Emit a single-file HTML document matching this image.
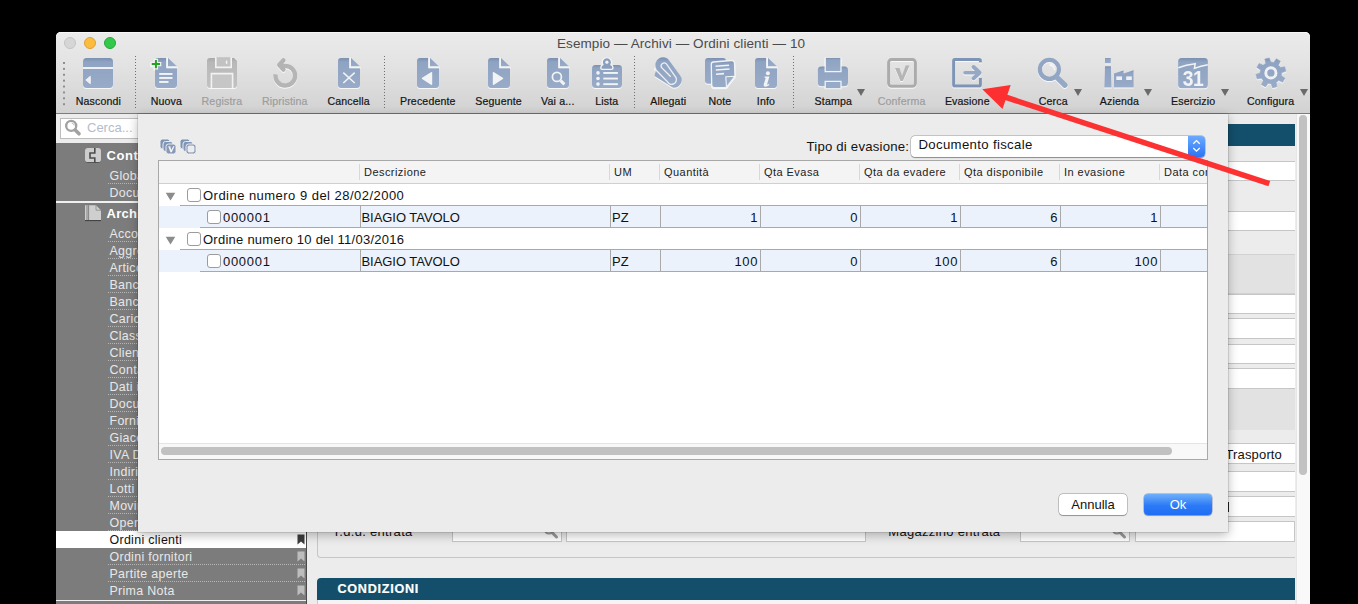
<!DOCTYPE html>
<html><head><meta charset="utf-8">
<style>
*{box-sizing:border-box;margin:0;padding:0}
html,body{width:1358px;height:604px;overflow:hidden;background:#000;font-family:"Liberation Sans",sans-serif}
div,span{position:absolute}
.t{white-space:nowrap}
.lbl{top:95px;font-size:10.6px;color:#141414;-webkit-text-stroke:0.2px currentColor;white-space:nowrap;text-align:center;letter-spacing:0.15px;line-height:12px}
.dis{color:#9d9d9d}
.si{left:109.5px;font-size:12.4px;color:#e8e8e8;white-space:nowrap;line-height:14px;letter-spacing:0.32px}
.dot{left:108px;width:198px;height:1px;background-image:linear-gradient(90deg,#b5b5b5 50%,transparent 50%);background-size:2px 1px}
.bm{left:297px;width:7px;height:10px}
.hd{font-size:10.8px;color:#222;white-space:nowrap;line-height:12px;top:166px}
.hs{top:164px;width:1px;height:16px;background:#d6d6d6}
.rt{font-size:13px;color:#111;white-space:nowrap;line-height:15px}
.cb{width:14px;height:14px;border:1px solid #9c9c9c;border-radius:3px;background:#fff}
</style></head><body>

<div style="left:56px;top:32px;width:1254px;height:580px;background:#ececec;border-radius:5px 5px 0 0;overflow:hidden"></div>
<div style="left:56px;top:32px;width:1254px;height:82px;background:linear-gradient(#ebebeb 0%,#e3e3e3 40%,#d2d2d2 100%);border-radius:5px 5px 0 0;border-bottom:1px solid #7c7c7c;box-shadow:inset 0 1px 0 #f7f7f7"></div>
<div style="left:64px;top:37px;width:12px;height:12px;border-radius:50%;background:#d6d6d6;border:0.5px solid #c4c4c4"></div>
<div style="left:84px;top:37px;width:12px;height:12px;border-radius:50%;background:#fcbd3f;border:0.5px solid #dea035"></div>
<div style="left:104px;top:37px;width:12px;height:12px;border-radius:50%;background:#34c84a;border:0.5px solid #24a83a"></div>
<div class="t" style="left:557px;top:36px;font-size:13.5px;color:#4b4b4b;line-height:15px;letter-spacing:0.09px">Esempio — Archivi — Ordini clienti — 10</div>
<div class="lbl" style="left:58.4px;width:80px">Nascondi</div>
<div class="lbl" style="left:126.4px;width:80px">Nuova</div>
<div class="lbl dis" style="left:181.9px;width:80px">Registra</div>
<div class="lbl dis" style="left:244.8px;width:80px">Ripristina</div>
<div class="lbl" style="left:308.7px;width:80px">Cancella</div>
<div class="lbl" style="left:387.8px;width:80px">Precedente</div>
<div class="lbl" style="left:458.6px;width:80px">Seguente</div>
<div class="lbl" style="left:517.8px;width:80px">Vai a...</div>
<div class="lbl" style="left:566.8px;width:80px">Lista</div>
<div class="lbl" style="left:628.3px;width:80px">Allegati</div>
<div class="lbl" style="left:679.9px;width:80px">Note</div>
<div class="lbl" style="left:726.0px;width:80px">Info</div>
<div class="lbl" style="left:793.3px;width:80px">Stampa</div>
<div class="lbl dis" style="left:861.6px;width:80px">Conferma</div>
<div class="lbl" style="left:927.3px;width:80px">Evasione</div>
<div class="lbl" style="left:1013.2px;width:80px">Cerca</div>
<div class="lbl" style="left:1079.4px;width:80px">Azienda</div>
<div class="lbl" style="left:1153.2px;width:80px">Esercizio</div>
<div class="lbl" style="left:1230.7px;width:80px">Configura</div>
<div style="left:63px;top:61.5px;width:2px;height:44.5px;background-image:linear-gradient(#8e8e8e 34%,transparent 34%);background-size:2px 5.9px"></div>
<div style="left:135px;top:56px;width:1px;height:54px;background-image:linear-gradient(#707070 33%,transparent 33%);background-size:1px 3px"></div>
<div style="left:384px;top:56px;width:1px;height:54px;background-image:linear-gradient(#707070 33%,transparent 33%);background-size:1px 3px"></div>
<div style="left:634px;top:56px;width:1px;height:54px;background-image:linear-gradient(#707070 33%,transparent 33%);background-size:1px 3px"></div>
<div style="left:793px;top:56px;width:1px;height:54px;background-image:linear-gradient(#707070 33%,transparent 33%);background-size:1px 3px"></div>
<div style="left:857px;top:89px;width:0;height:0;border-left:4px solid transparent;border-right:4px solid transparent;border-top:7px solid #6a6a6a"></div>
<div style="left:1073.5px;top:89px;width:0;height:0;border-left:4px solid transparent;border-right:4px solid transparent;border-top:7px solid #6a6a6a"></div>
<div style="left:1144px;top:89px;width:0;height:0;border-left:4px solid transparent;border-right:4px solid transparent;border-top:7px solid #6a6a6a"></div>
<div style="left:1220.5px;top:89px;width:0;height:0;border-left:4px solid transparent;border-right:4px solid transparent;border-top:7px solid #6a6a6a"></div>
<div style="left:1300px;top:89px;width:0;height:0;border-left:4px solid transparent;border-right:4px solid transparent;border-top:7px solid #6a6a6a"></div>
<svg width="1358" height="604" style="position:absolute;left:0;top:0">
<defs>
<linearGradient id="bg" x1="0" y1="0" x2="0" y2="1"><stop offset="0" stop-color="#7b8fb0"/><stop offset="0.14" stop-color="#8fa3c2"/><stop offset="1" stop-color="#98acc9"/></linearGradient>
<linearGradient id="gg" x1="0" y1="0" x2="0" y2="1"><stop offset="0" stop-color="#a9a9a9"/><stop offset="0.15" stop-color="#b8b8b8"/><stop offset="1" stop-color="#c2c2c2"/></linearGradient>
<filter id="gl" x="-5%" y="-5%" width="110%" height="110%"><feMorphology in="SourceAlpha" operator="dilate" radius="0.45" result="d"/><feOffset in="d" dy="0.55" result="o"/><feGaussianBlur in="o" stdDeviation="0.35" result="b"/><feFlood flood-color="#fbfbfb" flood-opacity="0.9" result="f"/><feComposite in="f" in2="b" operator="in" result="w"/><feMerge><feMergeNode in="w"/><feMergeNode in="SourceGraphic"/></feMerge></filter>
</defs>
<g filter="url(#gl)">
<!-- Nascondi -->
<rect x="83" y="58" width="30" height="30" rx="3.5" fill="url(#bg)"/>
<rect x="83" y="67" width="30" height="2" fill="#eef0f3"/>
<path d="M85.8,80 L90.3,76.3 V83.7 Z" fill="#eef0f3" stroke="#eef0f3" stroke-width="1" stroke-linejoin="round"/>
<!-- Nuova -->
<path d="M158,58 H166.3 V68.2 H177 V85 Q177,88 174,88 H158 Q155,88 155,85 V61 Q155,58 158,58 Z" fill="url(#bg)"/><path d="M168,58 L177,66.4 H168 Z" fill="url(#bg)"/><path d="M167.15,57.6 V67.3 H177.4" fill="none" stroke="#f3f4f6" stroke-width="1.5"/>
<rect x="159.2" y="73" width="13.3" height="1.9" fill="#f2f3f5"/>
<rect x="159.2" y="77" width="13.3" height="1.9" fill="#f2f3f5"/>
<rect x="159.2" y="81" width="9.3" height="1.9" fill="#f2f3f5"/>
<path d="M154.3,59.3 h3.2 v3.2 h3.2 v3.2 h-3.2 v3.2 h-3.2 v-3.2 h-3.2 v-3.2 h3.2 Z" fill="#22a622" stroke="#f4f4f4" stroke-width="1.2"/>
<!-- Registra -->
<path d="M210,58 H234 L237,61 V85 Q237,88 234,88 H210 Q207,88 207,85 V61 Q207,58 210,58 Z" fill="url(#gg)"/>
<path d="M215.8,57.2 V67.4 H231.2 V57.2" fill="#c2c2c2" stroke="#f2f2f2" stroke-width="1.6"/>
<ellipse cx="226.6" cy="62.3" rx="0.8" ry="2" fill="#f2f2f2"/>
<path d="M211.4,88 V73.6 H232.6 V88" fill="#c6c6c6" stroke="#f2f2f2" stroke-width="1.6"/>
<!-- Ripristina -->
<path d="M275.6,74.3 A9.8,9.8 0 1 0 285.3,66 L281,65.6" fill="none" stroke="#b5b5b5" stroke-width="4.4"/>
<path d="M283.4,60.4 L279.2,65 L283.4,69.6" fill="none" stroke="#b3b3b3" stroke-width="4.4" stroke-linecap="round" stroke-linejoin="round"/>
<!-- Cancella -->
<path d="M341,58 H349.3 V68.2 H360 V85 Q360,88 357,88 H341 Q338,88 338,85 V61 Q338,58 341,58 Z" fill="url(#bg)"/><path d="M351,58 L360,66.4 H351 Z" fill="url(#bg)"/><path d="M350.15,57.6 V67.3 H360.4" fill="none" stroke="#f3f4f6" stroke-width="1.5"/>
<path d="M343.3,72.6 L354.7,83 M354.7,72.6 L343.3,83" stroke="#f2f3f5" stroke-width="1.5"/>
<!-- Precedente -->
<path d="M420,58 H428.3 V68.2 H439 V85 Q439,88 436,88 H420 Q417,88 417,85 V61 Q417,58 420,58 Z" fill="url(#bg)"/><path d="M430,58 L439,66.4 H430 Z" fill="url(#bg)"/><path d="M429.15,57.6 V67.3 H439.4" fill="none" stroke="#f3f4f6" stroke-width="1.5"/>
<path d="M422.6,78.4 L431.4,72.8 V84.2 Z" fill="#f2f3f5" stroke="#f2f3f5" stroke-width="1.6" stroke-linejoin="round"/>
<!-- Seguente -->
<path d="M491,58 H499.3 V68.2 H510 V85 Q510,88 507,88 H491 Q488,88 488,85 V61 Q488,58 491,58 Z" fill="url(#bg)"/><path d="M501,58 L510,66.4 H501 Z" fill="url(#bg)"/><path d="M500.15,57.6 V67.3 H510.4" fill="none" stroke="#f3f4f6" stroke-width="1.5"/>
<path d="M493.6,72.8 V84.2 L502.4,78.4 Z" fill="#f2f3f5" stroke="#f2f3f5" stroke-width="1.6" stroke-linejoin="round"/>
<!-- Vai a -->
<path d="M550,58 H558.3 V68.2 H569 V85 Q569,88 566,88 H550 Q547,88 547,85 V61 Q547,58 550,58 Z" fill="url(#bg)"/><path d="M560,58 L569,66.4 H560 Z" fill="url(#bg)"/><path d="M559.15,57.6 V67.3 H569.4" fill="none" stroke="#f3f4f6" stroke-width="1.5"/>
<circle cx="556.9" cy="76.9" r="4.5" fill="none" stroke="#f2f3f5" stroke-width="1.7"/>
<path d="M560.6,80.6 L564.4,84.4" stroke="#f2f3f5" stroke-width="3"/>
<!-- Lista -->
<rect x="592" y="64.9" width="30" height="23.2" rx="3.5" fill="url(#bg)"/>
<path d="M602.8,64.6 A4.7,4.7 0 1 1 611,64.6 Q613,65.6 613,68 Q613,69.4 611.6,69.4 H602.2 Q600.8,69.4 600.8,68 Q600.8,65.6 602.8,64.6 Z" fill="#8a9ebd" stroke="#f2f3f5" stroke-width="1.4"/>
<circle cx="606.9" cy="62.2" r="1.6" fill="#f2f3f5"/>
<circle cx="598" cy="72.9" r="1.8" fill="#f2f3f5"/><circle cx="598" cy="78.5" r="1.8" fill="#f2f3f5"/><circle cx="598" cy="84.1" r="1.8" fill="#f2f3f5"/>
<rect x="603.3" y="72" width="14.6" height="1.9" fill="#f2f3f5"/><rect x="603.3" y="77.6" width="14.6" height="1.9" fill="#f2f3f5"/><rect x="603.3" y="83.2" width="14.6" height="1.9" fill="#f2f3f5"/>
<!-- Allegati -->
<path d="M669.75,61.13 A7.6,7.6 0 0 0 656.3,68.8 L654.4,75.9 L672.6,87.5 A7.6,7.6 0 0 0 680.15,75.43 Z" fill="url(#bg)"/>
<path d="M670.3,76.3 L661.4,67.4 A3.1,3.1 0 0 1 666.4,63.9 L676,77.6 A4.6,4.6 0 0 1 667.3,81.6 L654.5,68.5" fill="none" stroke="#eef0f3" stroke-width="1.3" stroke-linecap="round"/>
<!-- Note -->
<rect x="705" y="58" width="21" height="25.8" rx="3" fill="url(#bg)"/>
<path d="M711.3,64.3 Q711.2,62.3 713.4,62 L731.5,60.5 Q734.3,60.3 734.5,63 L735,76 L726,87.4 L714.3,87.6 Q711.8,87.6 711.7,85.2 Z" fill="url(#bg)" stroke="#f2f3f5" stroke-width="1.3"/>
<path d="M725.8,76.8 L735,76.2 L726.5,87.2 Z" fill="#9aaecb" stroke="#f2f3f5" stroke-width="1.1" stroke-linejoin="round"/>
<path d="M715.5,66.2 L729,65.2 M715.8,70 L729.5,69 M716,74.2 L724,73.6" stroke="#f2f3f5" stroke-width="1.6"/>
<!-- Info -->
<path d="M758,58 H766.3 V68.2 H777 V85 Q777,88 774,88 H758 Q755,88 755,85 V61 Q755,58 758,58 Z" fill="url(#bg)"/><path d="M768,58 L777,66.4 H768 Z" fill="url(#bg)"/><path d="M767.15,57.6 V67.3 H777.4" fill="none" stroke="#f3f4f6" stroke-width="1.5"/>
<circle cx="767.9" cy="73.2" r="2" fill="#f2f3f5"/><path d="M764.6,76.4 H769.4 L767.2,84.1 Q767.1,84.9 768,84.5 L769.3,83.5 L769.1,85.3 Q767.2,86.8 765.1,86.7 Q763.2,86.5 763.7,84.6 L765.6,78.2 Q765.7,77.6 764.4,77.5 Z" fill="#f2f3f5"/>
<!-- Stampa -->
<rect x="817.8" y="66.6" width="30.2" height="19.6" rx="3.5" fill="url(#bg)"/>
<path d="M825.2,58 V71.6 H841 V58 Z" fill="url(#bg)"/><path d="M825.2,57.5 V71.6 H841 V57.5" fill="none" stroke="#f2f3f5" stroke-width="1.3"/>
<path d="M825.2,88.2 V81.3 H841 V88.2 Z" fill="#97abc8"/><path d="M825.2,88.2 V81.3 H841 V88.2" fill="none" stroke="#f2f3f5" stroke-width="1.3"/>
<!-- Conferma -->
<rect x="888.6" y="59.6" width="26.8" height="26.6" rx="3" fill="none" stroke="#ababab" stroke-width="3"/>
<path d="M895,67.9 H899.4 L902.1,75.6 L905.6,65.4 H909.6 L902.9,81 H900.4 Z" fill="#b5b5b5"/>
<!-- Evasione -->
<path d="M980.4,62.5 V61 Q980.4,59.6 979,59.6 H955 Q953.6,59.6 953.6,61 V84.7 Q953.6,86.1 955,86.1 H979 Q980.4,86.1 980.4,84.7 V78" fill="none" stroke="#7d94b6" stroke-width="3"/>
<path d="M965,72.7 H977" stroke="#95a9c6" stroke-width="3.6" stroke-linecap="round"/>
<path d="M973.6,67 L979.6,72.7 L973.6,78.4" fill="none" stroke="#95a9c6" stroke-width="4" stroke-linecap="round" stroke-linejoin="round"/>
<!-- Cerca -->
<circle cx="1049.4" cy="69.4" r="9.5" fill="none" stroke="#92a6c4" stroke-width="4.3"/>
<path d="M1049.6,64.1 A5.3,5.3 0 0 1 1054.7,69.3" fill="none" stroke="#f2f3f5" stroke-width="1.5"/>
<path d="M1057.4,77.9 L1064.9,85.2" stroke="#95a9c6" stroke-width="5.4" stroke-linecap="round"/>
<!-- Azienda -->
<rect x="1105" y="58" width="5.8" height="5.3" fill="url(#bg)"/>
<path d="M1105,66.2 H1110.9 L1111.6,87.6 H1104.2 Z" fill="url(#bg)"/>
<path d="M1114,73.6 L1123.5,70.4 L1123.7,73.6 L1133.6,70.3 L1133.8,87.6 H1114 Z" fill="url(#bg)"/>
<rect x="1116.3" y="76.4" width="5.7" height="3.6" fill="#eef0f3"/>
<rect x="1126.2" y="76.4" width="5.6" height="3.6" fill="#eef0f3"/>
<!-- Esercizio -->
<rect x="1178.1" y="58" width="29.8" height="30.3" rx="3.5" fill="url(#bg)"/>
<path d="M1178.3,67.8 Q1186,64.8 1195.2,63.7 L1194.4,68.4 Q1201,66 1207.8,64.8" fill="none" stroke="#f2f3f5" stroke-width="1.5"/>
<text transform="translate(1193,86.2) scale(0.86,1)" font-family="Liberation Sans" font-weight="bold" font-size="22.5" fill="#f2f3f5" text-anchor="middle" letter-spacing="-0.6">31</text>
<!-- Configura -->
<path d="M1265.53,63.41 L1264.81,59.08 L1269.27,57.89 L1270.80,62.00 L1273.81,62.40 L1276.36,58.82 L1280.36,61.13 L1278.54,65.13 L1280.39,67.53 L1284.72,66.81 L1285.91,71.27 L1281.80,72.80 L1281.40,75.81 L1284.98,78.36 L1282.67,82.36 L1278.67,80.54 L1276.27,82.39 L1276.99,86.72 L1272.53,87.91 L1271.00,83.80 L1267.99,83.40 L1265.44,86.98 L1261.44,84.67 L1263.26,80.67 L1261.41,78.27 L1257.08,78.99 L1255.89,74.53 L1260.00,73.00 L1260.40,69.99 L1256.82,67.44 L1259.13,63.44 L1263.13,65.26 Z" fill="url(#bg)" stroke="#95a9c6" stroke-width="0.6" stroke-linejoin="round"/>
<circle cx="1270.9" cy="72.9" r="5.1" fill="none" stroke="#eef0f3" stroke-width="2.9"/>
</g>
</svg>
<div style="left:56px;top:114px;width:250px;height:29px;background:#ececec"></div>
<div style="left:60px;top:118px;width:200px;height:21px;background:#fff;border:1px solid #bdbdbd"></div>
<svg width="20" height="20" style="position:absolute;left:63px;top:119px"><circle cx="8.2" cy="6.9" r="5" fill="none" stroke="#a2a2a2" stroke-width="2.4"/><path d="M8.6,3.9 A3,3 0 0 1 11.2,6.5" fill="none" stroke="#b5b5b5" stroke-width="0.9"/><path d="M12.2,11 L16,14.8" stroke="#a2a2a2" stroke-width="3.6" stroke-linecap="round"/></svg>
<div class="t" style="left:87px;top:119.9px;font-size:13px;line-height:16px;color:#b4bccb">Cerca...</div>
<div style="left:56px;top:143px;width:250px;height:470px;background:#7c7c7c"></div>
<div style="left:85px;top:147.5px;width:16px;height:15px;background:#cdcdcd;border-radius:3px;border-bottom:1px solid #555"></div>
<svg width="16" height="16" style="position:absolute;left:85px;top:147px"><path d="M9.8,1 V6 H5 V11 H9.8 V16" fill="none" stroke="#4c4c4c" stroke-width="1.6"/></svg>
<div class="t" style="left:106.5px;top:147.7px;font-size:13px;line-height:16px;color:#fff;font-weight:bold;letter-spacing:0.6px">Conti</div>
<div class="si" style="top:169.1px">Globali</div>
<div class="dot" style="top:183px"></div>
<div class="si" style="top:185.7px">Documenti</div>
<div style="left:56px;top:201px;width:250px;height:1.5px;background:#f0f0f0"></div>
<svg width="18" height="18" style="position:absolute;left:84px;top:204px"><path d="M1,1.2 H12 L17,6.2 V16.6 H1 Z" fill="#cfcfcf"/><path d="M1,16.6 H17" stroke="#3a3a3a" stroke-width="1"/><path d="M3,1.2 V16 M4.6,1.2 V16" stroke="#7a7a7a" stroke-width="0.9"/><path d="M12,1.2 V6.2 H17" fill="none" stroke="#8a8a8a" stroke-width="0.8"/></svg>
<div class="t" style="left:106.5px;top:205.9px;font-size:13px;line-height:16px;color:#fff;font-weight:bold;letter-spacing:0.3px">Archivi</div>
<div class="si" style="top:226.6px">Acconti</div>
<div class="dot" style="top:241px"></div>
<svg width="8" height="11" style="position:absolute;left:297px;top:227.5px"><path d="M0.5,0.5 H7.5 V10.5 L4,7.5 L0.5,10.5 Z" fill="#bdbdbd"/></svg>
<div class="si" style="top:243.6px">Aggregazioni</div>
<div class="dot" style="top:258px"></div>
<svg width="8" height="11" style="position:absolute;left:297px;top:244.5px"><path d="M0.5,0.5 H7.5 V10.5 L4,7.5 L0.5,10.5 Z" fill="#bdbdbd"/></svg>
<div class="si" style="top:260.6px">Articoli</div>
<div class="dot" style="top:275px"></div>
<svg width="8" height="11" style="position:absolute;left:297px;top:261.5px"><path d="M0.5,0.5 H7.5 V10.5 L4,7.5 L0.5,10.5 Z" fill="#bdbdbd"/></svg>
<div class="si" style="top:277.6px">Banche</div>
<div class="dot" style="top:292px"></div>
<svg width="8" height="11" style="position:absolute;left:297px;top:278.5px"><path d="M0.5,0.5 H7.5 V10.5 L4,7.5 L0.5,10.5 Z" fill="#bdbdbd"/></svg>
<div class="si" style="top:294.6px">Banche azienda</div>
<div class="dot" style="top:309px"></div>
<svg width="8" height="11" style="position:absolute;left:297px;top:295.5px"><path d="M0.5,0.5 H7.5 V10.5 L4,7.5 L0.5,10.5 Z" fill="#bdbdbd"/></svg>
<div class="si" style="top:311.6px">Carichi</div>
<div class="dot" style="top:326px"></div>
<svg width="8" height="11" style="position:absolute;left:297px;top:312.5px"><path d="M0.5,0.5 H7.5 V10.5 L4,7.5 L0.5,10.5 Z" fill="#bdbdbd"/></svg>
<div class="si" style="top:328.6px">Classificazioni</div>
<div class="dot" style="top:343px"></div>
<svg width="8" height="11" style="position:absolute;left:297px;top:329.5px"><path d="M0.5,0.5 H7.5 V10.5 L4,7.5 L0.5,10.5 Z" fill="#bdbdbd"/></svg>
<div class="si" style="top:345.6px">Clienti</div>
<div class="dot" style="top:360px"></div>
<svg width="8" height="11" style="position:absolute;left:297px;top:346.5px"><path d="M0.5,0.5 H7.5 V10.5 L4,7.5 L0.5,10.5 Z" fill="#bdbdbd"/></svg>
<div class="si" style="top:362.6px">Contatti</div>
<div class="dot" style="top:377px"></div>
<svg width="8" height="11" style="position:absolute;left:297px;top:363.5px"><path d="M0.5,0.5 H7.5 V10.5 L4,7.5 L0.5,10.5 Z" fill="#bdbdbd"/></svg>
<div class="si" style="top:379.6px">Dati iniziali</div>
<div class="dot" style="top:394px"></div>
<svg width="8" height="11" style="position:absolute;left:297px;top:380.5px"><path d="M0.5,0.5 H7.5 V10.5 L4,7.5 L0.5,10.5 Z" fill="#bdbdbd"/></svg>
<div class="si" style="top:396.6px">Documenti</div>
<div class="dot" style="top:411px"></div>
<svg width="8" height="11" style="position:absolute;left:297px;top:397.5px"><path d="M0.5,0.5 H7.5 V10.5 L4,7.5 L0.5,10.5 Z" fill="#bdbdbd"/></svg>
<div class="si" style="top:413.6px">Fornitori</div>
<div class="dot" style="top:428px"></div>
<svg width="8" height="11" style="position:absolute;left:297px;top:414.5px"><path d="M0.5,0.5 H7.5 V10.5 L4,7.5 L0.5,10.5 Z" fill="#bdbdbd"/></svg>
<div class="si" style="top:430.6px">Giacenze</div>
<div class="dot" style="top:445px"></div>
<svg width="8" height="11" style="position:absolute;left:297px;top:431.5px"><path d="M0.5,0.5 H7.5 V10.5 L4,7.5 L0.5,10.5 Z" fill="#bdbdbd"/></svg>
<div class="si" style="top:447.6px">IVA Detraibile</div>
<div class="dot" style="top:462px"></div>
<svg width="8" height="11" style="position:absolute;left:297px;top:448.5px"><path d="M0.5,0.5 H7.5 V10.5 L4,7.5 L0.5,10.5 Z" fill="#bdbdbd"/></svg>
<div class="si" style="top:464.6px">Indirizzi</div>
<div class="dot" style="top:479px"></div>
<svg width="8" height="11" style="position:absolute;left:297px;top:465.5px"><path d="M0.5,0.5 H7.5 V10.5 L4,7.5 L0.5,10.5 Z" fill="#bdbdbd"/></svg>
<div class="si" style="top:481.6px">Lotti</div>
<div class="dot" style="top:496px"></div>
<svg width="8" height="11" style="position:absolute;left:297px;top:482.5px"><path d="M0.5,0.5 H7.5 V10.5 L4,7.5 L0.5,10.5 Z" fill="#bdbdbd"/></svg>
<div class="si" style="top:498.6px">Movimenti</div>
<div class="dot" style="top:513px"></div>
<svg width="8" height="11" style="position:absolute;left:297px;top:499.5px"><path d="M0.5,0.5 H7.5 V10.5 L4,7.5 L0.5,10.5 Z" fill="#bdbdbd"/></svg>
<div class="si" style="top:515.6px">Operazioni</div>
<div class="dot" style="top:530px"></div>
<svg width="8" height="11" style="position:absolute;left:297px;top:516.5px"><path d="M0.5,0.5 H7.5 V10.5 L4,7.5 L0.5,10.5 Z" fill="#bdbdbd"/></svg>
<div style="left:56px;top:531px;width:250px;height:17px;background:#fff"></div>
<div class="si" style="top:532.6px;color:#111">Ordini clienti</div>
<svg width="8" height="11" style="position:absolute;left:297px;top:533.5px"><path d="M0.5,0.5 H7.5 V10.5 L4,7.5 L0.5,10.5 Z" fill="#3c3c3c"/></svg>
<div class="si" style="top:549.6px">Ordini fornitori</div>
<div class="dot" style="top:564px"></div>
<svg width="8" height="11" style="position:absolute;left:297px;top:550.5px"><path d="M0.5,0.5 H7.5 V10.5 L4,7.5 L0.5,10.5 Z" fill="#bdbdbd"/></svg>
<div class="si" style="top:566.6px">Partite aperte</div>
<div class="dot" style="top:581px"></div>
<svg width="8" height="11" style="position:absolute;left:297px;top:567.5px"><path d="M0.5,0.5 H7.5 V10.5 L4,7.5 L0.5,10.5 Z" fill="#bdbdbd"/></svg>
<div class="si" style="top:583.6px">Prima Nota</div>
<svg width="8" height="11" style="position:absolute;left:297px;top:584.5px"><path d="M0.5,0.5 H7.5 V10.5 L4,7.5 L0.5,10.5 Z" fill="#bdbdbd"/></svg>
<div style="left:56px;top:599.5px;width:250px;height:1.5px;background:#f0f0f0"></div>
<div style="left:306px;top:114px;width:990px;height:490px;background:#ececec"></div>
<div style="left:306px;top:114px;width:1px;height:490px;background:#4a4a4a"></div>
<div style="left:1200px;top:124px;width:95px;height:22px;background:#134f6b;"></div>
<div style="left:1200px;top:161px;width:95px;height:20px;background:#fff;border-top:1px solid #c6c6c6;border-bottom:1px solid #c6c6c6;"></div>
<div style="left:1200px;top:211px;width:95px;height:20px;background:#fff;border-top:1px solid #c6c6c6;border-bottom:1px solid #c6c6c6;"></div>
<div style="left:1200px;top:253.5px;width:95px;height:40.5px;background:#e2e2e2;border-top:1px solid #d2d2d2;border-bottom:1px solid #d2d2d2;"></div>
<div style="left:1200px;top:294px;width:95px;height:20px;background:#fff;border-top:1px solid #c6c6c6;border-bottom:1px solid #c6c6c6;"></div>
<div style="left:1200px;top:318px;width:95px;height:21px;background:#fff;border-top:1px solid #c6c6c6;border-bottom:1px solid #c6c6c6;"></div>
<div style="left:1200px;top:344px;width:95px;height:20px;background:#fff;border-top:1px solid #c6c6c6;border-bottom:1px solid #c6c6c6;"></div>
<div style="left:1200px;top:368px;width:95px;height:21px;background:#fff;border-top:1px solid #c6c6c6;border-bottom:1px solid #c6c6c6;"></div>
<div style="left:1200px;top:389px;width:95px;height:41px;background:#e2e2e2;"></div>
<div style="left:1200px;top:443px;width:95px;height:21px;background:#fff;border-top:1px solid #c6c6c6;border-bottom:1px solid #c6c6c6;"></div>
<div style="left:1200px;top:470.5px;width:95px;height:21.0px;background:#fff;border-top:1px solid #c6c6c6;border-bottom:1px solid #c6c6c6;"></div>
<div style="left:1200px;top:496px;width:95px;height:20.5px;background:#fff;border-top:1px solid #c6c6c6;border-bottom:1px solid #c6c6c6;"></div>
<div style="left:1200px;top:521px;width:95px;height:20px;background:#fff;border-top:1px solid #c6c6c6;border-bottom:1px solid #c6c6c6;"></div>
<div class="t" style="left:1225.5px;top:446.5px;font-size:13px;line-height:16px;color:#111;letter-spacing:0.15px">Trasporto</div>
<div style="left:1228px;top:502px;width:1.3px;height:10px;background:#222"></div>
<div style="left:1296px;top:114px;width:14px;height:490px;background:#f9f9f9;border-left:1px solid #e6e6e6"></div>
<div style="left:1299px;top:115px;width:8px;height:360px;background:#c2c2c2;border-radius:4px"></div>
<div style="left:317px;top:481px;width:978px;height:77px;border-left:1px solid #c6c6c6;border-bottom:1px solid #c6c6c6;border-radius:0 0 0 4px"></div>
<div class="t" style="left:332.5px;top:524.0px;font-size:13px;line-height:16px;color:#111;letter-spacing:0.3px">T.d.d. entrata</div>
<div class="t" style="left:888.3px;top:523.5px;font-size:13px;line-height:16px;color:#111;letter-spacing:0.3px">Magazzino entrata</div>
<div style="left:452px;top:521px;width:110px;height:21px;background:#fff;border:1px solid #c6c6c6"></div>
<svg width="20" height="20" style="position:absolute;left:541px;top:522px"><circle cx="8" cy="7" r="4.5" fill="none" stroke="#9a9a9a" stroke-width="2"/><path d="M11,10.5 L15.5,15" stroke="#9a9a9a" stroke-width="3" stroke-linecap="round"/></svg>
<div style="left:566px;top:521px;width:300px;height:21px;background:#fff;border:1px solid #c6c6c6"></div>
<div style="left:1020px;top:521px;width:110px;height:21px;background:#fff;border:1px solid #c6c6c6"></div>
<svg width="20" height="20" style="position:absolute;left:1109px;top:522px"><circle cx="8" cy="7" r="4.5" fill="none" stroke="#9a9a9a" stroke-width="2"/><path d="M11,10.5 L15.5,15" stroke="#9a9a9a" stroke-width="3" stroke-linecap="round"/></svg>
<div style="left:1135px;top:521px;width:160px;height:21px;background:#fff;border:1px solid #c6c6c6"></div>
<div style="left:317px;top:578px;width:978px;height:22px;background:#134f6b;border-radius:4px 0 0 0"></div>
<div class="t" style="left:337.4px;top:582.1px;font-size:12.6px;line-height:15px;color:#fff;font-weight:bold;letter-spacing:0.75px;-webkit-text-stroke:0.2px #fff">CONDIZIONI</div>
<div style="left:317px;top:600px;width:978px;height:10px;background:#f4f4f4;border-left:1px solid #c9c9c9"></div>
<div style="left:138px;top:114px;width:1090px;height:418px;background:#ececec;box-shadow:0 3px 10px rgba(0,0,0,0.28), 0 0 0 0.5px rgba(0,0,0,0.2)"></div>
<svg width="1358" height="604" style="position:absolute;left:0;top:0">
<g stroke="#f4f4f4" stroke-width="0.9">
<rect x="160" y="139" width="10" height="10" rx="2.5" fill="#7f93b3"/><rect x="163" y="141.5" width="10" height="10" rx="2.5" fill="#8094b4"/><rect x="166" y="144" width="10" height="10" rx="2.5" fill="#8699b8"/>
<rect x="180" y="139" width="10" height="10" rx="2.5" fill="#7f93b3"/><rect x="183" y="141.5" width="10" height="10" rx="2.5" fill="#8094b4"/><rect x="186" y="144" width="10" height="10" rx="2.5" fill="#8699b8"/>
</g>
<path d="M168.2,146.3 H170.2 L171.3,150 L173.2,146.2 H174.5 L171.8,152.3 H170.4 Z" fill="#f4f4f4"/>
<rect x="188" y="146" width="6" height="6" rx="1" fill="#ececec" stroke="#f4f4f4" stroke-width="0.8"/>
</svg>
<div class="t" style="left:806.5px;top:139.4px;font-size:13.2px;line-height:16px;color:#111;letter-spacing:0.2px">Tipo di evasione:</div>
<div style="left:910.5px;top:136.3px;width:294.3px;height:20.5px;background:#fff;border-radius:4px;box-shadow:0 0 0 0.5px rgba(0,0,0,0.3),0 0.5px 1px rgba(0,0,0,0.3)"></div>
<div style="left:1188px;top:136.3px;width:16.8px;height:20.5px;background:linear-gradient(#6aabff,#2b73f5);border-radius:0 4px 4px 0"></div>
<svg width="17" height="20" style="position:absolute;left:1188px;top:136.3px"><path d="M5.3,7.8 L8.5,4.6 L11.7,7.8 M5.3,12 L8.5,15.2 L11.7,12" fill="none" stroke="#fff" stroke-width="1.3"/></svg>
<div class="t" style="left:918.5px;top:137.1px;font-size:13.2px;line-height:16px;color:#111;letter-spacing:0.33px">Documento fiscale</div>
<div style="left:158px;top:160px;width:1050px;height:300px;background:#fff;border:1px solid #a8a8a8;overflow:hidden">
<div style="left:0;top:0;width:1048px;height:23px;background:#f4f4f4;border-bottom:1px solid #d0d0d0"></div>
<div style="left:200px;top:3px;width:1px;height:16px;background:#d8d8d8"></div>
<div class="t" style="left:205px;top:4.5px;font-size:11px;line-height:13px;color:#222;letter-spacing:0.45px">Descrizione</div>
<div style="left:450px;top:3px;width:1px;height:16px;background:#d8d8d8"></div>
<div class="t" style="left:455px;top:4.5px;font-size:11px;line-height:13px;color:#222;letter-spacing:0.45px">UM</div>
<div style="left:500px;top:3px;width:1px;height:16px;background:#d8d8d8"></div>
<div class="t" style="left:505px;top:4.5px;font-size:11px;line-height:13px;color:#222;letter-spacing:0.45px">Quantità</div>
<div style="left:600px;top:3px;width:1px;height:16px;background:#d8d8d8"></div>
<div class="t" style="left:605px;top:4.5px;font-size:11px;line-height:13px;color:#222;letter-spacing:0.45px">Qta Evasa</div>
<div style="left:700px;top:3px;width:1px;height:16px;background:#d8d8d8"></div>
<div class="t" style="left:705px;top:4.5px;font-size:11px;line-height:13px;color:#222;letter-spacing:0.45px">Qta da evadere</div>
<div style="left:800px;top:3px;width:1px;height:16px;background:#d8d8d8"></div>
<div class="t" style="left:805px;top:4.5px;font-size:11px;line-height:13px;color:#222;letter-spacing:0.45px">Qta disponibile</div>
<div style="left:900px;top:3px;width:1px;height:16px;background:#d8d8d8"></div>
<div class="t" style="left:905px;top:4.5px;font-size:11px;line-height:13px;color:#222;letter-spacing:0.45px">In evasione</div>
<div style="left:1000px;top:3px;width:1px;height:16px;background:#d8d8d8"></div>
<div class="t" style="left:1005px;top:4.5px;font-size:11px;line-height:13px;color:#222;letter-spacing:0.45px">Data consegna</div>
<svg width="12" height="10" style="position:absolute;left:6px;top:30.5px"><path d="M0.7,0.8 H10.3 L5.5,8.5 Z" fill="#8c8c8c"/></svg>
<div class="cb" style="left:28px;top:27px;width:14px;height:14px"></div>
<div class="t rt" style="left:44px;top:26.5px;letter-spacing:0.47px">Ordine numero 9 del 28/02/2000</div>
<div style="left:0;top:45px;width:1048px;height:22px;background:#ecf2fc"></div>
<div style="left:21px;top:44px;width:1048px;height:1px;background:#a9a9a9"></div>
<div style="left:41px;top:66px;width:1048px;height:1px;background:#a9a9a9"></div>
<div style="left:201px;top:44px;width:1px;height:23px;background:#a9a9a9"></div>
<div style="left:451px;top:44px;width:1px;height:23px;background:#a9a9a9"></div>
<div style="left:501px;top:44px;width:1px;height:23px;background:#a9a9a9"></div>
<div style="left:601px;top:44px;width:1px;height:23px;background:#a9a9a9"></div>
<div style="left:701px;top:44px;width:1px;height:23px;background:#a9a9a9"></div>
<div style="left:801px;top:44px;width:1px;height:23px;background:#a9a9a9"></div>
<div style="left:901px;top:44px;width:1px;height:23px;background:#a9a9a9"></div>
<div style="left:1001px;top:44px;width:1px;height:23px;background:#a9a9a9"></div>
<div class="cb" style="left:48px;top:49px;width:14px;height:14px"></div>
<div class="t rt" style="left:64px;top:48.6px;letter-spacing:0.7px">000001</div>
<div class="t rt" style="left:202.5px;top:48.6px;letter-spacing:-0.05px">BIAGIO TAVOLO</div>
<div class="t rt" style="left:453px;top:48.6px">PZ</div>
<div class="t rt" style="left:501px;width:98px;text-align:right;top:48.6px;letter-spacing:0.6px">1</div>
<div class="t rt" style="left:601px;width:98px;text-align:right;top:48.6px;letter-spacing:0.6px">0</div>
<div class="t rt" style="left:701px;width:98px;text-align:right;top:48.6px;letter-spacing:0.6px">1</div>
<div class="t rt" style="left:801px;width:98px;text-align:right;top:48.6px;letter-spacing:0.6px">6</div>
<div class="t rt" style="left:901px;width:98px;text-align:right;top:48.6px;letter-spacing:0.6px">1</div>
<svg width="12" height="10" style="position:absolute;left:6px;top:74.5px"><path d="M0.7,0.8 H10.3 L5.5,8.5 Z" fill="#8c8c8c"/></svg>
<div class="cb" style="left:28px;top:71px;width:14px;height:14px"></div>
<div class="t rt" style="left:44px;top:70.5px;letter-spacing:0.25px">Ordine numero 10 del 11/03/2016</div>
<div style="left:0;top:89px;width:1048px;height:22px;background:#ecf2fc"></div>
<div style="left:21px;top:88px;width:1048px;height:1px;background:#a9a9a9"></div>
<div style="left:41px;top:110px;width:1048px;height:1px;background:#a9a9a9"></div>
<div style="left:201px;top:88px;width:1px;height:23px;background:#a9a9a9"></div>
<div style="left:451px;top:88px;width:1px;height:23px;background:#a9a9a9"></div>
<div style="left:501px;top:88px;width:1px;height:23px;background:#a9a9a9"></div>
<div style="left:601px;top:88px;width:1px;height:23px;background:#a9a9a9"></div>
<div style="left:701px;top:88px;width:1px;height:23px;background:#a9a9a9"></div>
<div style="left:801px;top:88px;width:1px;height:23px;background:#a9a9a9"></div>
<div style="left:901px;top:88px;width:1px;height:23px;background:#a9a9a9"></div>
<div style="left:1001px;top:88px;width:1px;height:23px;background:#a9a9a9"></div>
<div class="cb" style="left:48px;top:93px;width:14px;height:14px"></div>
<div class="t rt" style="left:64px;top:92.6px;letter-spacing:0.7px">000001</div>
<div class="t rt" style="left:202.5px;top:92.6px;letter-spacing:-0.05px">BIAGIO TAVOLO</div>
<div class="t rt" style="left:453px;top:92.6px">PZ</div>
<div class="t rt" style="left:501px;width:98px;text-align:right;top:92.6px;letter-spacing:0.6px">100</div>
<div class="t rt" style="left:601px;width:98px;text-align:right;top:92.6px;letter-spacing:0.6px">0</div>
<div class="t rt" style="left:701px;width:98px;text-align:right;top:92.6px;letter-spacing:0.6px">100</div>
<div class="t rt" style="left:801px;width:98px;text-align:right;top:92.6px;letter-spacing:0.6px">6</div>
<div class="t rt" style="left:901px;width:98px;text-align:right;top:92.6px;letter-spacing:0.6px">100</div>
<div style="left:0;top:282px;width:1048px;height:16px;background:#f8f8f8;border-top:1px solid #e4e4e4"></div>
<div style="left:2px;top:286px;width:1011px;height:8px;background:#c1c1c1;border-radius:4px"></div>
</div>
<div style="left:1059.3px;top:494.3px;width:67.5px;height:20.4px;background:#fff;border-radius:4px;box-shadow:0 0 0 0.5px rgba(0,0,0,0.35),0 0.5px 1px rgba(0,0,0,0.25)"></div>
<div class="t" style="left:1059px;width:68px;text-align:center;top:496.5px;font-size:13px;line-height:16px;color:#111">Annulla</div>
<div style="left:1144px;top:494px;width:68px;height:21px;background:linear-gradient(#6fb0fb,#2c7af6 55%,#1f6ef4);border-radius:4px;box-shadow:0 0 0 0.5px rgba(0,40,160,0.4),0 0.5px 1px rgba(0,0,0,0.25)"></div>
<div class="t" style="left:1144px;width:68px;text-align:center;top:496.5px;font-size:13px;line-height:16px;color:#fff">Ok</div>
<svg width="1358" height="604" style="position:absolute;left:0;top:0">
<path d="M1005,97 L1269.3,183.7" stroke="#fc3131" stroke-width="5.6"/>
<path d="M982.3,89.2 L1010.7,84.9 L1002.5,109 Z" fill="#fc3030"/>
</svg>
</body></html>
